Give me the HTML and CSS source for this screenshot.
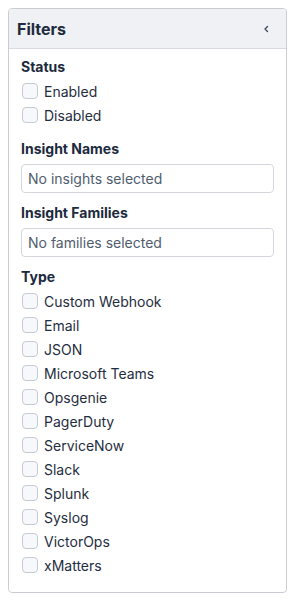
FILE: index.html
```html
<!DOCTYPE html>
<html lang="en">
<head>
    <meta charset="UTF-8">
    <meta name="viewport" content="width=device-width, initial-scale=1.0">
    <title>Filters</title>
    <link rel="stylesheet" href="styles.css">
</head>
<body>
    <div class="filters">
        <div class="filters-header">
            <h2>Filters</h2>
            <button class="collapse-btn" aria-label="Collapse">
                <svg width="8" height="8" viewBox="0 0 8 8"><path d="M5.5 1.5 L3 4 L5.5 6.5" fill="none" stroke="#3d4a5c" stroke-width="1.4" stroke-linecap="round" stroke-linejoin="round"/></svg>
            </button>
        </div>
        <div class="filters-body">
            <h3 class="list-title">Status</h3>
            <label class="check"><input type="checkbox"><span class="box"></span>Enabled</label>
            <label class="check"><input type="checkbox"><span class="box"></span>Disabled</label>

            <h3 class="gap">Insight Names</h3>
            <div class="select">No insights selected</div>

            <h3 class="gap-sm">Insight Families</h3>
            <div class="select">No families selected</div>

            <h3 class="gap-sm list-title">Type</h3>
            <label class="check"><input type="checkbox"><span class="box"></span>Custom Webhook</label>
            <label class="check"><input type="checkbox"><span class="box"></span>Email</label>
            <label class="check"><input type="checkbox"><span class="box"></span>JSON</label>
            <label class="check"><input type="checkbox"><span class="box"></span>Microsoft Teams</label>
            <label class="check"><input type="checkbox"><span class="box"></span>Opsgenie</label>
            <label class="check"><input type="checkbox"><span class="box"></span>PagerDuty</label>
            <label class="check"><input type="checkbox"><span class="box"></span>ServiceNow</label>
            <label class="check"><input type="checkbox"><span class="box"></span>Slack</label>
            <label class="check"><input type="checkbox"><span class="box"></span>Splunk</label>
            <label class="check"><input type="checkbox"><span class="box"></span>Syslog</label>
            <label class="check"><input type="checkbox"><span class="box"></span>VictorOps</label>
            <label class="check"><input type="checkbox"><span class="box"></span>xMatters</label>
        </div>
    </div>
</body>
</html>
```

FILE: styles.css
```css
body {
    margin: 8px;
    font-family: Inter, "Noto Sans", sans-serif;
    color: #1c2a3d;
    background: #fff;
}

.filters {
    width: 277px;
    border: 1px solid #c9cdd3;
    border-radius: 4px;
    overflow: hidden;
}

.filters-header {
    display: flex;
    align-items: center;
    justify-content: space-between;
    height: 39px;
    padding: 0 12px 0 8px;
    background-color: #eff1f4;
    border-bottom: 1px solid #d7dade;
}

.filters-header h2 {
    margin: 0;
    font-size: 16px;
    font-weight: 700;
    color: #1f2b3d;
}

.collapse-btn {
    display: flex;
    align-items: center;
    justify-content: center;
    width: 16px;
    height: 16px;
    padding: 0;
    border: none;
    background: none;
    cursor: pointer;
}

.filters-body {
    padding: 8px 12px 15px 12px;
}

h3 {
    margin: 0;
    font-size: 14px;
    font-weight: 700;
    line-height: 20px;
    color: #1c2a3d;
}

h3.list-title {
    margin-bottom: 2px;
}

h3.gap {
    margin-top: 12px;
}

h3.gap-sm {
    margin-top: 10px;
}

.check {
    display: flex;
    align-items: center;
    height: 24px;
    font-size: 14px;
    color: #1f2d40;
    cursor: pointer;
}

.check input {
    display: none;
}

.check .box {
    width: 14px;
    height: 14px;
    margin: 0 6px 0 1px;
    border: 1px solid #c6ccd4;
    border-radius: 4px;
    background-color: #f6f8fb;
}

.select {
    margin-top: 5px;
    height: 27px;
    line-height: 27px;
    padding: 0 6px;
    border: 1px solid #d3d7dc;
    border-radius: 4px;
    font-size: 14px;
    color: #4f5d6e;
}
```
